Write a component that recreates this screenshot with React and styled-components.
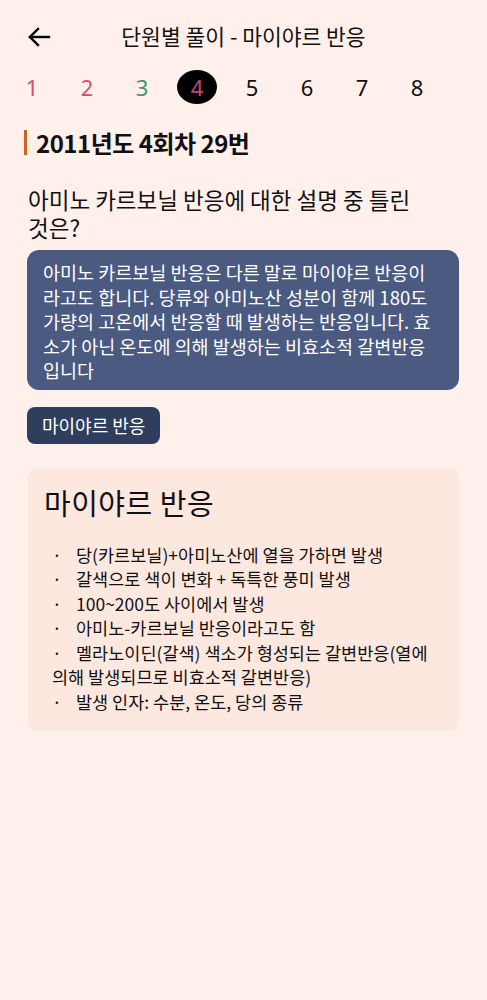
import React from "react";
import styled, { createGlobalStyle } from "styled-components";

const Global = createGlobalStyle`
  html, body { margin: 0; padding: 0; background: #fff0ec; }
  body { font-family: "Noto Sans CJK KR", "Noto Sans", sans-serif; color: #111; }
`;

const Page = styled.div`
  width: 487px;
  min-height: 1000px;
  background: #fff0ec;
  box-sizing: border-box;
  padding: 0 27px;
  display: flex;
  flex-direction: column;
`;

const Header = styled.header`
  height: 74px;
  display: flex;
  align-items: center;
  position: relative;
  justify-content: center;
`;

const BackBtn = styled.button`
  position: absolute;
  left: 0;
  top: 25px;
  width: 24px;
  height: 24px;
  padding: 0;
  border: 0;
  background: none;
  display: flex;
  align-items: center;
  justify-content: center;
`;

const Title = styled.h1`
  margin: 0;
  font-size: 21.5px;
  font-weight: 400;
  color: #111;
  line-height: 28px;
  transform: translateY(-1px);
`;

const NumRow = styled.nav`
  display: flex;
  gap: 15px;
  margin-left: -15px;
  margin-top: -4px;
  height: 34px;
  align-items: center;
`;

const Num = styled.span`
  width: 40px;
  height: 34px;
  border-radius: 50%;
  display: flex;
  align-items: center;
  justify-content: center;
  font-family: "Noto Sans", sans-serif;
  font-size: 22px;
  color: ${(p) => p.$color};
  background: ${(p) => (p.$active ? "#000" : "transparent")};
`;

const Heading = styled.h2`
  margin: 26px 0 0 -3px;
  border-left: 3px solid #c8661c;
  padding-left: 9px;
  font-size: 24px;
  font-weight: 700;
  line-height: 25px;
  letter-spacing: -0.5px;
  color: #111;
`;

const Question = styled.p`
  margin: 30px 0 0 1px;
  font-size: 22.5px;
  line-height: 28px;
  color: #111;
`;

const Bubble = styled.div`
  margin-top: 9px;
  background: #4a5a80;
  color: #fff;
  border-radius: 12px;
  padding: 10px 16px 7px 16px;
  font-size: 18.5px;
  line-height: 24.5px;
  white-space: nowrap;
  width: 432px;
  box-sizing: border-box;
`;

const Tag = styled.button`
  align-self: flex-start;
  margin-top: 17px;
  background: #2f3e5c;
  color: #fff;
  border: 0;
  border-radius: 8px;
  height: 37px;
  padding: 0 15px;
  font-family: "Noto Sans CJK KR", sans-serif;
  font-size: 18px;
`;

const Panel = styled.section`
  margin-top: 24px;
  margin-left: 1px;
  width: 431px;
  box-sizing: border-box;
  background: #fde8e0;
  border-radius: 10px;
  padding: 14px 10px 17px 16px;
`;

const PanelTitle = styled.h3`
  margin: 0;
  font-size: 29px;
  font-weight: 400;
  line-height: 40px;
  letter-spacing: 0.5px;
`;

const List = styled.div`
  margin-top: 21px;
  padding-left: 8px;
  font-size: 17.5px;
  line-height: 24.5px;
  color: #111;
  white-space: nowrap;
`;

const Item = styled.p`
  margin: 0;
`;

const Dot = styled.span`
  display: inline-block;
  width: 24px;
`;

const numbers = [
  { n: 1, c: "#d0506f" },
  { n: 2, c: "#d0506f" },
  { n: 3, c: "#3e9a6c" },
  { n: 4, c: "#c24870", active: true },
  { n: 5, c: "#111" },
  { n: 6, c: "#111" },
  { n: 7, c: "#111" },
  { n: 8, c: "#111" },
];

const items = [
  ["당(카르보닐)+아미노산에 열을 가하면 발생"],
  ["갈색으로 색이 변화 + 독특한 풍미 발생"],
  ["100~200도 사이에서 발생"],
  ["아미노-카르보닐 반응이라고도 함"],
  ["멜라노이딘(갈색) 색소가 형성되는 갈변반응(열에", "의해 발생되므로 비효소적 갈변반응)"],
  ["발생 인자: 수분, 온도, 당의 종류"],
];

export default function App() {
  return (
    <>
      <Global />
      <Page>
        <Header>
          <BackBtn aria-label="back">
            <svg width="24" height="24" viewBox="0 0 24 24" fill="none" stroke="#000" strokeWidth="2.4" strokeLinecap="square">
              <path d="M22 12H3" />
              <path d="M11 4l-8 8 8 8" />
            </svg>
          </BackBtn>
          <Title>단원별 풀이 - 마이야르 반응</Title>
        </Header>
        <NumRow>
          {numbers.map((x) => (
            <Num key={x.n} $color={x.c} $active={x.active}>
              {x.n}
            </Num>
          ))}
        </NumRow>
        <Heading>2011년도 4회차 29번</Heading>
        <Question>
          아미노 카르보닐 반응에 대한 설명 중 틀린
          <br />
          것은?
        </Question>
        <Bubble>
          아미노 카르보닐 반응은 다른 말로 마이야르 반응이
          <br />
          라고도 합니다. 당류와 아미노산 성분이 함께 180도
          <br />
          가량의 고온에서 반응할 때 발생하는 반응입니다. 효
          <br />
          소가 아닌 온도에 의해 발생하는 비효소적 갈변반응
          <br />
          입니다
        </Bubble>
        <Tag>마이야르 반응</Tag>
        <Panel>
          <PanelTitle>마이야르 반응</PanelTitle>
          <List>
            {items.map((lines, i) => (
              <Item key={i}>
                <Dot>·</Dot>
                {lines[0]}
                {lines[1] && (
                  <>
                    <br />
                    {lines[1]}
                  </>
                )}
              </Item>
            ))}
          </List>
        </Panel>
      </Page>
    </>
  );
}
